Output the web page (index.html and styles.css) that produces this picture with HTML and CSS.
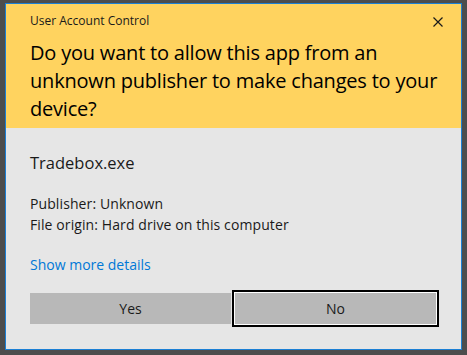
FILE: index.html
```html
<!DOCTYPE html>
<html>
<head>
<meta charset="utf-8">
<link rel="stylesheet" href="styles.css">
</head>
<body>
<div class="window">
  <div class="header">
    <div class="titlebar">
      <span class="title">User Account Control</span>
      <svg class="close" width="10" height="10" viewBox="0 0 10 10"><path d="M0.5 0.5L9.5 9.5M9.5 0.5L0.5 9.5" stroke="#1a1a1a" stroke-width="1.2"/></svg>
    </div>
    <div class="question">Do you want to allow this app from an unknown publisher to make changes to your device?</div>
  </div>
  <div class="content">
    <div class="appname">Tradebox.exe</div>
    <div class="info">
      <div>Publisher: Unknown</div>
      <div>File origin: Hard drive on this computer</div>
    </div>
    <a class="details" href="#">Show more details</a>
    <div class="buttons">
      <button class="btn">Yes</button>
      <button class="btn focused">No</button>
    </div>
  </div>
</div>
</body>
</html>
```
FILE: styles.css
```css
html, body {
  margin: 0;
  padding: 0;
}
body {
  background: #4d4d4d;
  width: 467px;
  height: 355px;
  padding: 3px 0 0 5px;
  box-sizing: border-box;
  font-family: "Open Sans", "Noto Sans", sans-serif;
  color: #000;
}
.window {
  width: 457px;
  height: 347px;
  box-sizing: border-box;
  border: 1px solid #1b7fd4;
  background: #e6e6e6;
  display: flex;
  flex-direction: column;
}
.header {
  background: #ffd35f;
  padding: 9px 0 5px 24px;
}
.titlebar {
  display: flex;
  align-items: center;
  justify-content: space-between;
  height: 16px;
  padding-right: 18px;
}
.title {
  font-size: 12px;
  line-height: 16px;
  color: #1a1a1a;
}
.close {
  display: block;
  margin-top: 1px;
}
.question {
  margin-top: 10px;
  font-size: 20px;
  line-height: 28px;
  letter-spacing: -0.2px;
  padding-right: 0;
  color: #000;
}
.content {
  padding: 24px 24px 0 24px;
  display: flex;
  flex-direction: column;
}
.appname {
  font-size: 16.5px;
  line-height: 22px;
  color: #1a1a1a;
}
.info {
  margin-top: 19px;
  font-size: 14px;
  line-height: 21px;
  letter-spacing: 0.1px;
  color: #1a1a1a;
}
.details {
  margin-top: 20px;
  font-size: 14px;
  line-height: 20px;
  color: #0078d7;
  text-decoration: none;
  align-self: flex-start;
}
.buttons {
  margin-top: 18px;
  display: flex;
  gap: 4px;
}
.btn {
  width: 201px;
  height: 31px;
  border: none;
  background: #b8b8b8;
  font-family: inherit;
  font-size: 14px;
  color: #1a1a1a;
  padding: 0;
}
.btn.focused {
  box-shadow: 0 0 0 1px #fff, 0 0 0 3px #000;
}
```
